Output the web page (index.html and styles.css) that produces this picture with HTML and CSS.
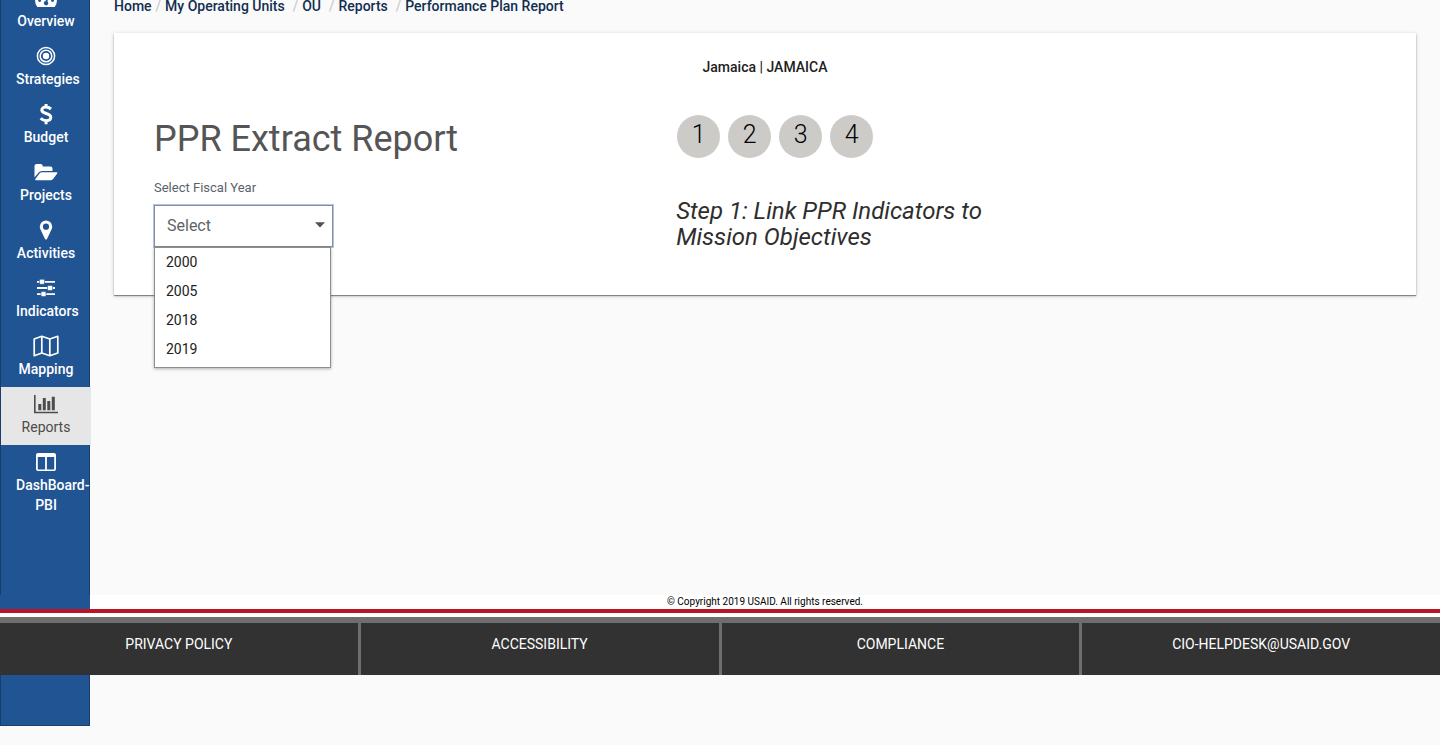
FILE: index.html
```html
<!DOCTYPE html>
<html lang="en">
<head>
<meta charset="utf-8">
<title>Performance Plan Report</title>
<link rel="stylesheet" href="styles.css">
</head>
<body>
<div class="shell">
  <nav class="sidebar" aria-label="Main">
    <ul class="nav-list">
      <li><a class="nav-item" href="#">
        <svg class="icon" width="22" height="18" viewBox="0 0 22 18" fill="currentColor"><path fill-rule="evenodd" d="M2.300 18Q0 15 0 11A11 11 0 0 1 22 11Q22 15 19.700 18ZM4.600 10a1.500 1.500 0 1 0 .1 3 1.500 1.500 0 0 0-.1-3ZM17.500 10a1.500 1.500 0 1 0 .1 3 1.500 1.500 0 0 0-.1-3ZM11.600 7.500l-.9 4.500a2.200 2.200 0 1 0 1.800.5l.7-4.600Z"/></svg>
        <span>Overview</span></a></li>
      <li><a class="nav-item" href="#">
        <svg class="icon" width="20" height="20" viewBox="0 0 20 20" fill="none" stroke="currentColor" stroke-width="1.500"><circle cx="10" cy="10" r="8.600"/><circle cx="10" cy="10" r="5.800"/><circle cx="10" cy="10" r="3.200" fill="currentColor" stroke="none"/></svg>
        <span>Strategies</span></a></li>
      <li><a class="nav-item" href="#">
        <svg class="icon" width="14" height="22" viewBox="0 0 14 22" fill="none" stroke="currentColor" stroke-width="3"><path d="M12 6C10.500 4.700 8.700 4.100 6.900 4.100 4.500 4.100 2.800 5.200 2.800 7c0 4.500 9 2.600 9 7.300 0 2.100-1.900 3.400-4.500 3.400-2.200 0-4.200-.9-5.600-2.400M7.100 1v3.500M7.100 17v4.200"/></svg>
        <span>Budget</span></a></li>
      <li><a class="nav-item" href="#">
        <svg class="icon" width="24" height="18" viewBox="0 0 24 18" fill="currentColor"><path d="M.5 14.500V3Q.5 1 2.500 1h4.200q2 0 2 2v.5h7.800q2 0 2 2V8H8q-2 0-3.400 1.500Z"/><path d="M8 9.200h14.500q1.400 0 .7 1.200l-4.100 5.500q-1 1.300-2.800 1.300H2q-1.500 0-.6-1.200l4-5.500Q6.500 9.200 8 9.200Z"/></svg>
        <span>Projects</span></a></li>
      <li><a class="nav-item" href="#">
        <svg class="icon" width="14" height="20" viewBox="0 0 14 20" fill="currentColor"><path fill-rule="evenodd" d="M7 .5A6.200 6.200 0 0 1 13.200 6.700c0 1-.2 1.800-.6 2.600L8 18.900q-1 1.300-2 0L1.400 9.300C1 8.500.8 7.700.8 6.700A6.200 6.200 0 0 1 7 .5ZM7 3.600a3.100 3.100 0 1 0 0 6.200 3.100 3.100 0 0 0 0-6.200Z"/></svg>
        <span>Activities</span></a></li>
      <li><a class="nav-item" href="#">
        <svg class="icon" width="20" height="18" viewBox="0 0 20 18" fill="currentColor"><path d="M1 2h18v1.800H1ZM1 8.100h18v1.800H1ZM1 14.200h18V16H1Z"/><g stroke="#205493" stroke-width=".6"><rect x="3.500" y=".3" width="5" height="5" rx="1"/><rect x="11.500" y="6.500" width="5" height="5" rx="1"/><rect x="5" y="12.600" width="5" height="5" rx="1"/></g></svg>
        <span>Indicators</span></a></li>
      <li><a class="nav-item" href="#">
        <svg class="icon" width="26" height="22" viewBox="0 0 26 22" fill="none" stroke="currentColor" stroke-width="1.700" stroke-linejoin="round"><path d="M1.200 4 8.800 1.300 16.800 4 24.800 1.300V18L16.800 20.700 8.800 18 1.200 20.700ZM8.800 1.300V18M16.800 4V20.700"/></svg>
        <span>Mapping</span></a></li>
      <li><a class="nav-item nav-item-current" href="#" aria-current="page">
        <svg class="icon" width="24" height="20" viewBox="0 0 24 20" fill="currentColor"><path d="M0 1h1.600v16.800H24v1.500H0ZM4.300 10h3v6.300h-3ZM8.800 4h3v12.300h-3ZM13.300 7h3v9.300h-3ZM17.800 2.800h3v13.500h-3Z"/></svg>
        <span>Reports</span></a></li>
      <li><a class="nav-item" href="#">
        <svg class="icon" width="20" height="20" viewBox="0 0 20 20" fill="currentColor"><path fill-rule="evenodd" d="M2 1h16q2 0 2 2v14q0 2-2 2H2q-2 0-2-2V3Q0 1 2 1ZM1.800 5v12q0 .4.4.4h6.900V5ZM10.900 5v12.400h6.900q.4 0 .4-.4V5Z"/></svg>
        <span>DashBoard-PBI</span></a></li>
    </ul>
  </nav>
  <main class="content">
    <nav aria-label="Breadcrumb">
      <ol class="breadcrumb">
        <li><a href="#">Home</a></li>
        <li><a href="#">My Operating Units</a></li>
        <li><a href="#">OU</a></li>
        <li><a href="#">Reports</a></li>
        <li><a href="#">Performance Plan Report</a></li>
      </ol>
    </nav>
    <section class="card">
      <p class="unit">Jamaica | JAMAICA</p>
      <div class="columns">
        <div class="report">
          <h1 class="title">PPR Extract Report</h1>
          <label class="field-label" for="year">Select Fiscal Year</label>
          <div class="field">
            <select class="select" id="year"><option>Select</option></select>
            <svg class="caret" width="10" height="6" viewBox="0 0 10 6"><path fill="#4f5356" d="M0 .3h10L5 5.500Z"/></svg>
            <ul class="menu" role="listbox" aria-label="Fiscal years">
              <li role="option">2000</li>
              <li role="option">2005</li>
              <li role="option">2018</li>
              <li role="option">2019</li>
            </ul>
          </div>
        </div>
        <div>
          <div class="steps">
            <button class="step" type="button">1</button>
            <button class="step" type="button">2</button>
            <button class="step" type="button">3</button>
            <button class="step" type="button">4</button>
          </div>
          <h2 class="step-title">Step 1: Link PPR Indicators to Mission Objectives</h2>
        </div>
      </div>
    </section>
  </main>
</div>
<footer class="footer">
  <p class="copyright">© Copyright 2019 USAID. All rights reserved.</p>
  <div class="stripe"></div>
  <div class="footer-links">
    <a href="#">PRIVACY POLICY</a>
    <a href="#">ACCESSIBILITY</a>
    <a href="#">COMPLIANCE</a>
    <a href="#">CIO-HELPDESK@USAID.GOV</a>
  </div>
</footer>
</body>
</html>
```
FILE: styles.css
```css
* {
  box-sizing: border-box;
}

body {
  min-height: 100vh;
  margin: 0;
  background: #fafafa;
  color: #212121;
  font-family: Roboto, "Liberation Sans", sans-serif;
  font-size: 14px;
  line-height: 20px;
}

h1, h2, p, ul, ol {
  margin: 0;
  padding: 0;
  font-weight: 400;
}

ul, ol {
  list-style: none;
}

a {
  color: inherit;
  text-decoration: none;
}

.shell {
  display: flex;
  min-height: calc(100vh - 19px);
}

.sidebar {
  flex: none;
  width: 90px;
  border: 1px solid #193e6d;
  border-top: 0;
  background: #205493;
}

.nav-list {
  margin-top: -19px;
  margin-right: -2px;
}

.nav-item {
  display: grid;
  grid-template-columns: minmax(0, 1fr);
  grid-template-rows: 20px auto;
  row-gap: 3px;
  padding: 7px 15px 8px;
  color: #fff;
  font-weight: 500;
  text-align: center;
}

.nav-item-current {
  background: #e6e6e6;
  color: #4c4c4c;
  font-weight: 400;
}

.icon {
  place-self: center;
}

.content {
  flex: 1;
  min-width: 0;
  padding: 0 24px;
}

.breadcrumb {
  display: flex;
  gap: 4px;
  padding-bottom: 21px;
  color: #112e51;
  font-weight: 500;
  line-height: 12px;
}

.breadcrumb li {
  display: flex;
  gap: 4px;
}

.breadcrumb li + li {
  padding-right: 4px;
}

.breadcrumb li + li::before {
  content: "/";
  color: #ccc;
}

.card {
  padding: 24px 40px 45px;
  background: #fff;
  box-shadow: 0 1px 1px rgba(0, 0, 0, 0.4), 0 1px 4px rgba(0, 0, 0, 0.2);
}

.unit {
  font-weight: 500;
  text-align: center;
}

.columns {
  display: grid;
  grid-template-columns: 47fr 63fr;
  padding-top: 38px;
}

.report {
  display: grid;
  align-content: start;
  justify-items: start;
}

.title {
  color: #555;
  font-size: 36px;
  line-height: 48px;
}

.field-label {
  margin: 15px 0 7px;
  color: #5b616b;
  font-size: 13px;
}

.field {
  position: relative;
}

.select {
  display: block;
  width: 179px;
  height: 42px;
  padding: 0 12px;
  border: 1px solid #8d8d8d;
  border-radius: 0;
  outline: 1px solid #a9c4f5;
  outline-offset: 0;
  appearance: none;
  background: #fff;
  color: #5f6368;
  font: inherit;
  font-size: 16px;
}

.caret {
  position: absolute;
  top: 17px;
  right: 8px;
}

.menu {
  position: absolute;
  top: 100%;
  left: 0;
  width: 177px;
  padding: 0 11px 3px;
  border: 1px solid #8d8d8d;
  background: #fff;
  box-shadow: 0 1px 3px rgba(0, 0, 0, 0.3);
  line-height: 29px;
}

.steps {
  display: flex;
  gap: 8px;
  padding: 0 1px;
}

.step {
  width: 43px;
  height: 43px;
  padding: 0 0 4px;
  border: 0;
  border-radius: 50%;
  background: #cccbc8;
  color: #000;
  font: inherit;
  font-size: 25px;
  font-weight: 300;
}

.step-title {
  max-width: 340px;
  margin-top: 40px;
  color: #2e2e2e;
  font-size: 24px;
  font-style: italic;
  line-height: 26px;
}

.footer {
  position: relative;
  margin-top: -131px;
  margin-bottom: 51px;
}

.copyright {
  border-left: 90px solid #205493;
  background: #fff;
  color: #000;
  font-size: 10px;
  line-height: 14px;
  text-align: center;
}

.stripe {
  height: 8px;
  border-top: 4px solid #ba1428;
  background: #fff;
}

.footer-links {
  display: grid;
  grid-template-columns: repeat(4, 1fr);
  column-gap: 3px;
  border-top: 6px solid #6e6e6e;
  background: #6e6e6e;
}

.footer-links a {
  padding: 11px 0 21px;
  background: #323232;
  color: #fff;
  text-align: center;
}
```
